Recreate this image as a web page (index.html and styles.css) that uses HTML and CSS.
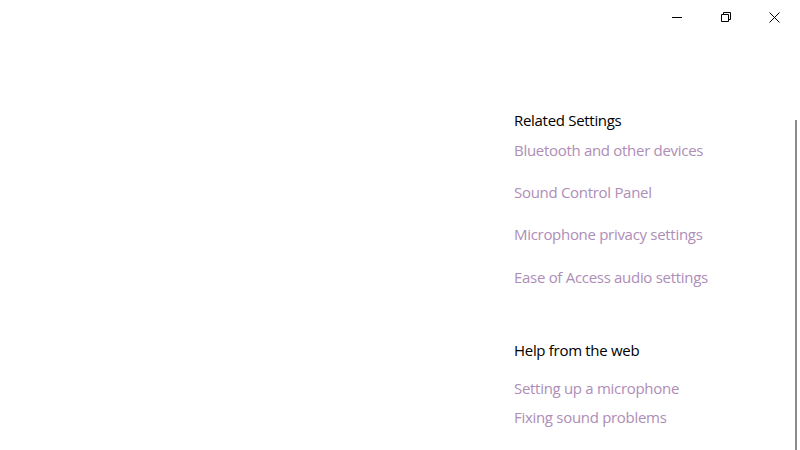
FILE: index.html
```html
<!DOCTYPE html>
<html>
<head>
<meta charset="utf-8">
<link rel="stylesheet" href="styles.css">
</head>
<body>
<div class="titlebar">
  <div class="ctl">
    <svg width="10" height="10" viewBox="0 0 10 10"><path d="M0 5.5H10" stroke="#000" stroke-width="1" fill="none"/></svg>
  </div>
  <div class="ctl">
    <svg width="10" height="10" viewBox="0 0 10 10"><path d="M0.5 2.5H7.5V9.5H0.5Z M2.5 2.5V0.5H9.5V7.5H7.5" stroke="#000" stroke-width="1" fill="none"/></svg>
  </div>
  <div class="ctl">
    <svg width="11" height="11" viewBox="0 0 11 11"><path d="M0.5 0.5L10.5 10.5M10.5 0.5L0.5 10.5" stroke="#000" stroke-width="1" fill="none"/></svg>
  </div>
</div>
<div class="main">
  <div class="side">
    <section class="group">
      <h2 class="title">Related Settings</h2>
      <ul class="links spaced">
        <li>Bluetooth and other devices</li>
        <li>Sound Control Panel</li>
        <li>Microphone privacy settings</li>
        <li class="last">Ease of Access audio settings</li>
      </ul>
    </section>
    <section class="group help">
      <h2 class="title">Help from the web</h2>
      <ul class="links tight">
        <li>Setting up a microphone</li>
        <li>Fixing sound problems</li>
      </ul>
    </section>
  </div>
</div>
<div class="scrollbar"></div>
</body>
</html>
```
FILE: styles.css
```css
html, body {
  margin: 0;
  padding: 0;
  background: #fff;
  width: 800px;
  height: 450px;
  overflow: hidden;
  font-family: "Open Sans", "Noto Sans", sans-serif;
}
.titlebar {
  display: flex;
  justify-content: flex-end;
  height: 32px;
  padding-top: 1px;
  padding-right: 1px;
}
.ctl {
  width: 49px;
  height: 32px;
  display: flex;
  align-items: center;
  justify-content: center;
}
.main {
  display: flex;
  justify-content: flex-end;
  margin-top: -1px;
}
.side {
  width: 286px;
  padding-top: 76px;
}
.title {
  margin: 0;
  font-size: 15px;
  font-weight: 400;
  color: #000;
  line-height: 24px;
  letter-spacing: -0.3px;
}
.links {
  list-style: none;
  margin: 0;
  padding: 0;
  color: #ae8db7;
  font-size: 15px;
  line-height: 24px;
  letter-spacing: -0.3px;
}
.spaced {
  margin-top: 6px;
  display: flex;
  flex-direction: column;
  gap: 18px;
}
.spaced .last {
  margin-top: 1px;
}
.help {
  margin-top: 49px;
}
.tight {
  margin-top: 14px;
  display: flex;
  flex-direction: column;
  gap: 5px;
}
.scrollbar {
  position: absolute;
  right: 3px;
  top: 120px;
  width: 2px;
  height: 330px;
  background: #8a8a8a;
}
```
